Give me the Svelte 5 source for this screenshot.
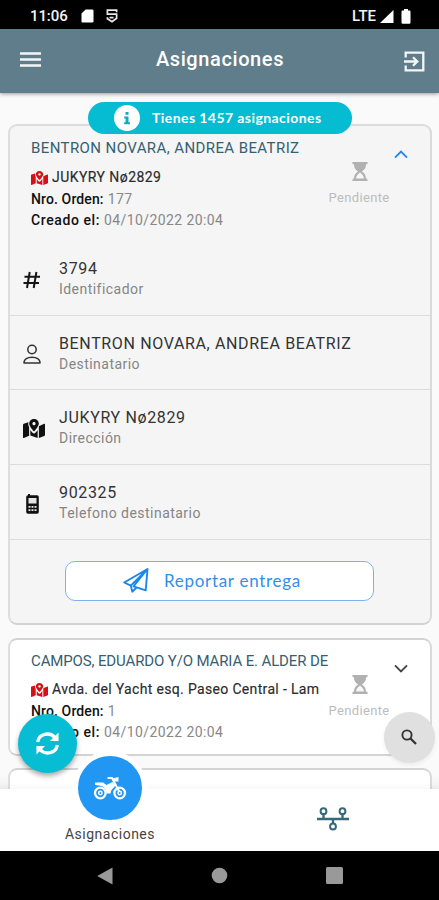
<script>
  const details = [
    { icon: 'hash', value: '3794', label: 'Identificador' },
    { icon: 'user', value: 'BENTRON NOVARA, ANDREA BEATRIZ', label: 'Destinatario' },
    { icon: 'map', value: 'JUKYRY Nø2829', label: 'Dirección' },
    { icon: 'phone', value: '902325', label: 'Telefono destinatario' },
  ];
  const cards = [
    { name: 'BENTRON NOVARA, ANDREA BEATRIZ', address: 'JUKYRY Nø2829', order: '177', date: '04/10/2022 20:04', open: true },
    { name: 'CAMPOS, EDUARDO Y/O MARIA E. ALDER DE', address: 'Avda. del Yacht esq. Paseo Central - Lam', order: '1', date: '04/10/2022 20:04', open: false },
  ];
</script>

{#snippet mapIcon()}
  <svg class="map" viewBox="0 0 576 512" preserveAspectRatio="none" fill="currentColor"><path d="M288 0c-69.59 0-126 56.41-126 126 0 56.26 82.35 158.8 113.9 196.02 6.39 7.54 17.82 7.54 24.2 0C331.65 284.8 414 182.26 414 126 414 56.41 357.59 0 288 0zm0 168c-23.2 0-42-18.8-42-42s18.8-42 42-42 42 18.8 42 42-18.8 42-42 42zM20.12 130.950A32 32 0 0 0 0 160.660v335.320c0 11.32 11.43 19.06 21.94 14.86L160 448V214.92c-8.84-15.98-16.07-31.54-21.25-46.42V90zM288 389.67c-14.07 0-27.38-6.18-36.51-16.96-19.66-23.2-40.57-49.62-59.49-76.72v152l192 64V296c-18.92 27.09-39.82 53.52-59.49 76.72-9.13 10.77-22.44 16.95-36.51 16.95zm266.06-258.51L416 194v318l139.88-55.95A31.996 31.996 0 0 0 576 426.34V146.020c0-11.32-11.43-19.06-21.94-14.86z" /></svg>
{/snippet}

<div class="screen">
  <div class="status">
    <span class="time">11:06</span>
    <svg class="sd" width="13" height="14" viewBox="0 0 13 14"><path d="M4.6.5h6.6Q12.5.5 12.5 1.8v10.4q0 1.3-1.3 1.3H1.8Q.5 13.500.5 12.200V4.600z" fill="#fff" /></svg>
    <svg class="shield" width="12" height="14" viewBox="0 0 12 14" fill="none" stroke="#e8e8e8" stroke-width="1.700"><path d="M10.600 3.200V1.200H1.400v4h9.200v4.100L6 12.800 1.400 9.700V8.200M3.500 8.600h4" /></svg>
    <span class="lte">LTE</span>
    <svg class="signal" width="14" height="13" viewBox="0 0 14 13"><path d="M13.500 0v13H0z" fill="#fff" /></svg>
    <svg width="10" height="15" viewBox="0 0 10 15"><path d="M3 0h4v1.500h1.500Q9.500 1.500 9.500 2.700v10.800q0 1.200-1.200 1.200H1.700Q.5 14.700.5 13.500V2.700Q.5 1.500 1.500 1.500H3z" fill="#fff" /></svg>
  </div>

  <header>
    <svg width="21" height="15" viewBox="0 0 21 15" stroke="#f3f6f7" stroke-width="2.300"><path d="M0 1.500h21M0 7.500h21M0 13.500h21" /></svg>
    <h1>Asignaciones</h1>
    <svg width="21" height="21" viewBox="0 0 21 21" fill="none" stroke="#f3f6f7" stroke-width="2.300"><path d="M1.700 6.500V1.700h17.600v17.600H1.700v-4.800M0 10.500h12.500M9 6.200l4.300 4.300L9 14.800" /></svg>
  </header>

  <main>
    <div class="pill">
      <svg width="26" height="26" viewBox="0 0 26 26"><circle cx="13" cy="13" r="13" fill="#fff" /><path d="M11.500 7h3v2.700h-3zM10.200 11.500h4.300v5.700h1.500v2h-5.800v-2h1.400v-3.700h-1.400z" fill="#12aabd" /></svg>
      <span>Tienes 1457 asignaciones</span>
    </div>

    {#each cards as card}
      <section class="card" class:open={card.open}>
        <div class="head">
          <div class="info">
            <h2 class:long={!card.open}>{card.name}</h2>
            <p class="address">{@render mapIcon()}<span>{card.address}</span></p>
            <p><b>Nro. Orden:</b> <span class="grey">{card.order}</span></p>
            <p><b class="created">Creado el:</b> <span class="grey date">{card.date}</span></p>
          </div>
          <div class="state">
            <svg width="16" height="19" viewBox="0 0 16 19"><path d="M.5 0h15v2.200H14c0 4-1.700 5.700-4.300 7.300C12.300 11.100 14 12.800 14 16.800h1.500V19H.5v-2.200H2c0-4 1.700-5.700 4.300-7.300C3.700 7.900 2 6.200 2 2.200H.5z" fill="#b1b1b1" /><path d="M8 10.500c-2 1.600-3.700 3-4 6h8c-.3-3-2-4.400-4-6z" fill="#f7f7f7" /></svg>
            <span>Pendiente</span>
          </div>
          <svg class="chev" width="14" height="9" viewBox="0 0 14 9" fill="none" stroke-width="1.900"><path d={card.open ? 'M1 7.700l6-6 6 6' : 'M1 1.300l6 6 6-6'} /></svg>
        </div>
        {#if card.open}
          {#each details as d}
            <div class="row">
              <div class="ico {d.icon}">
                {#if d.icon === 'hash'}
                  <svg width="18" height="18" viewBox="0 0 18 18" stroke="#151515" stroke-width="2"><path d="M1.500 5.700h15.500M.5 12.100h15.500M6.700 1L4 17M13.400 1l-2.700 16" /></svg>
                {:else if d.icon === 'user'}
                  <svg width="18" height="20" viewBox="0 0 18 20" fill="none" stroke="#333" stroke-width="1.500"><circle cx="9" cy="5.500" r="4.200" /><path d="M1 19c-.8-7.700 16.800-7.700 16 0z" stroke-linejoin="round" /></svg>
                {:else if d.icon === 'map'}
                  {@render mapIcon()}
                {:else}
                  <svg width="13" height="20" viewBox="0 0 13 20"><path d="M2 1.200V0h2v1.200h7q1.800 0 1.800 1.800v15q0 1.800-1.800 1.800H2Q.2 19.800.2 18V3Q.2 1.200 2 1.200z" fill="#111" /><path d="M2.500 4h8v5.500h-8zM2.500 12h2v1.700h-2zM5.500 12h2v1.700h-2zM8.500 12h2v1.700h-2zM2.500 15.200h2v1.700h-2zM5.500 15.200h2v1.700h-2zM8.500 15.200h2v1.700h-2z" fill="#e5e5e5" /></svg>
                {/if}
              </div>
              <div class="text"><strong>{d.value}</strong><small>{d.label}</small></div>
            </div>
          {/each}
          <button>
            <svg width="26" height="25" viewBox="0 0 26 25" fill="none" stroke="#1a88ea" stroke-width="1.900" stroke-linejoin="round"><path d="M24.500 1L1.200 14.500l6.600 3.200zM24.500 1l-1.800 21.300-12.200-4zM7.800 17.700l1.500 6 4.300-4.200M7.800 17.700L24.500 1" /></svg>
            <span>Reportar entrega</span>
          </button>
        {/if}
      </section>
    {/each}
    <section class="card next"></section>
  </main>

  <nav>
    <div class="tab">
      <div class="bubble">
        <svg width="34" height="24" viewBox="0 0 34 24" fill="none" stroke="#fff"><circle cx="7.300" cy="17" r="5.300" stroke-width="2.300" /><circle cx="26.700" cy="17" r="5.300" stroke-width="2.300" /><circle cx="7.300" cy="17" r="1.700" stroke-width="1.500" /><circle cx="26.700" cy="17" r="1.700" stroke-width="1.500" /><path d="M14.500 2h4.500l7.500 14" stroke-width="2" /><path d="M2 6.500h8l3.500 2.500 6-3 3 3.500-4 4.500-1 3.500h-4Q13 11.500 8 9.800L2 9z" fill="#fff" stroke="none" /><path d="M19.500 2.500L25.500 1v4.500L21 5.500z" fill="#fff" stroke="none" /></svg>
      </div>
      <span>Asignaciones</span>
    </div>
    <div class="tab second">
      <svg width="32" height="24" viewBox="0 0 32 24" fill="none" stroke="#376879" stroke-width="2"><path d="M0 12h32M6.500 7v5M25.500 7v5M16 12v4" stroke-width="2.300" /><circle cx="6.500" cy="4.200" r="2.900" /><circle cx="25.500" cy="4.200" r="2.900" /><circle cx="16" cy="19.500" r="2.900" /></svg>
    </div>
  </nav>

  <div class="system">
    <svg width="16" height="18" viewBox="0 0 16 18"><path d="M15.500.5v17L.2 9z" fill="#999" /></svg>
    <svg width="17" height="17" viewBox="0 0 17 17"><circle cx="8.500" cy="8.500" r="7.800" fill="#999" /></svg>
    <svg width="17" height="17" viewBox="0 0 17 17"><rect width="17" height="17" rx="1.500" fill="#999" /></svg>
  </div>

  <div class="fab sync">
    <svg width="25" height="25" viewBox="0 0 26 26" fill="none" stroke="#fff" stroke-width="3.400"><path d="M2.800 11.500C4 2.500 15.500.5 21 7M23.200 14.500C22 23.500 10.500 25.500 5 19" /><path d="M24.500 1.500v9h-9zM1.500 24.500v-9h9z" fill="#fff" stroke="none" /></svg>
  </div>
  <div class="fab search">
    <svg width="16" height="16" viewBox="0 0 16 16" fill="none" stroke="#333" stroke-width="1.900"><circle cx="6" cy="6" r="4.600" /><path d="M9.300 9.300l5.700 5.700" stroke-width="2.300" /></svg>
  </div>
</div>

<style>
  .screen { position: relative; width: 439px; height: 900px; display: flex; flex-direction: column; overflow: hidden; background: #fafafa; font-family: Roboto, sans-serif; }
  svg { display: block; flex: none; }
  h1, h2, p { margin: 0; }
  .status { flex: none; height: 29px; box-sizing: border-box; padding: 3px 28px 0 30px; display: flex; align-items: center; background: #000; color: #f5f5f5; font-size: 15px; font-weight: 500; }
  .time { width: 51px; letter-spacing: -.1px; }
  .shield { margin-left: 12px; }
  .lte { margin-left: auto; margin-right: 4px; }
  .signal { margin-right: 7px; }
  header { position: relative; z-index: 1; flex: none; height: 64px; box-sizing: border-box; padding: 0 14px 4px 20px; display: flex; align-items: center; justify-content: space-between; background: #607d8b; box-shadow: 0 1px 4px #0006; }
  header svg:last-child { margin-top: 4px; }
  h1 { color: #fff; font-size: 20px; font-weight: 500; letter-spacing: .6px; margin-right: 5px; }
  main { flex: none; height: 696px; box-sizing: border-box; position: relative; padding: 31px 7px 0 8px; overflow: hidden; display: flex; flex-direction: column; gap: 13px; background: linear-gradient(#fafafa 98%, #f1f1f1); }
  .pill { position: absolute; z-index: 2; left: 88px; top: 9px; width: 264px; height: 32px; box-sizing: border-box; border-radius: 16px; padding-left: 26px; display: flex; align-items: center; gap: 12px; background: #05bcd3; color: #fff; font: 700 14px/20px Lato, sans-serif; letter-spacing: .43px; white-space: nowrap; }
  .pill span { margin-top: -1px; }
  .card { flex: none; height: 118px; box-sizing: border-box; border: 2px solid #d3d3d3; border-left-color: #dedede; border-right-color: #dadada; border-radius: 9px; background: #fff; overflow: hidden; }
  .card.open { height: 501px; background: #f5f5f5; border-top-color: #dcdcdc; }
  .head { height: 114px; display: flex; align-items: flex-start; }
  .open .head { height: 115px; padding-top: 1px; box-sizing: border-box; }
  .info, .state { flex: none; }
  .info { padding: 11px 0 0 21px; width: 292px; }
  h2 { height: 21px; line-height: 20px; margin-bottom: 7px; color: #356070; font-size: 15px; font-weight: 400; letter-spacing: .41px; white-space: nowrap; }
  h2.long { letter-spacing: -.13px; }
  .open h2 { margin-bottom: 8px; }
  p { display: flex; gap: 4px; align-items: center; height: 21.500px; line-height: 21.500px; font-size: 14px; color: #222; white-space: nowrap; }
  p b { font-weight: 500; color: #111; letter-spacing: .12px; }
  p b.created { letter-spacing: .6px; }
  .grey { color: #888; letter-spacing: .4px; }
  .address :global(.map) { width: 17px; height: 14px; color: #d31217; }
  .address { color: #2b2b2b; letter-spacing: .34px; -webkit-text-stroke: .15px #2b2b2b; }
  .open .address { letter-spacing: .45px; }
  .state { padding-top: 35px; width: 70px; margin-left: 1px; display: flex; flex-direction: column; align-items: center; gap: 8px; color: #bcbcbc; font-size: 13px; line-height: 18px; letter-spacing: .35px; }
  .state svg { margin-left: 1px; }
  .chev { margin: 24px 0 0 0; stroke: #444; }
  .open .chev { margin-top: 23px; stroke: #2388e7; }
  .row { height: 74.700px; box-sizing: border-box; border-bottom: 1.500px solid #dcdcdc; display: flex; }
  .ico { width: 49px; height: 77px; display: flex; align-items: center; padding-left: 13px; box-sizing: border-box; }
  .ico.phone { padding-left: 16px; }
  .ico :global(.map) { width: 22px; height: 19px; color: #111; }
  .text { display: flex; flex-direction: column; padding-top: 17px; white-space: nowrap; }
  .text strong { color: #333; font-size: 16px; font-weight: 400; line-height: 21px; letter-spacing: .64px; }
  .text small { color: #858585; font-size: 14px; line-height: 20px; letter-spacing: .46px; }
  button { width: 309px; height: 40px; margin: 21px 0 0 55px; padding: 0 0 1px 57px; box-sizing: border-box; display: flex; align-items: center; gap: 15px; background: #fff; border: 1.500px solid #7db2ef; border-radius: 10px; color: #328fe9; font: 400 17px Lato, sans-serif; letter-spacing: .7px; }
  .next { margin-top: -1px; }
  nav { position: relative; z-index: 2; flex: none; height: 62px; display: flex; background: #fff; box-shadow: 0 -2px 6px #0000000a; }
  .tab { width: 220px; display: flex; flex-direction: column; align-items: center; font-size: 14px; line-height: 18px; color: #444; letter-spacing: .5px; }
  .bubble { flex: none; width: 64px; height: 64px; margin-top: -38px; margin-bottom: 0; border: 5px solid #fff; border-radius: 50%; display: flex; align-items: center; justify-content: center; background: #2196f3; }
  .second { width: 219px; padding: 18px 0 0 7px; box-sizing: border-box; }
  .system { flex: none; height: 49px; background: #000; display: flex; align-items: center; justify-content: space-between; padding: 0 96px 0 97px; }
  .fab { position: absolute; z-index: 3; border-radius: 50%; display: flex; align-items: center; justify-content: center; }
  .sync { left: 18px; top: 714px; width: 59px; height: 59px; background: #06bdd3; box-shadow: 0 3px 5px #0005; }
  .search { left: 384px; top: 712px; width: 51px; height: 51px; background: #e0e0e0; box-shadow: 0 2px 4px #0001; }
  .search svg { margin-right: 1px; margin-bottom: 1px; }
</style>
